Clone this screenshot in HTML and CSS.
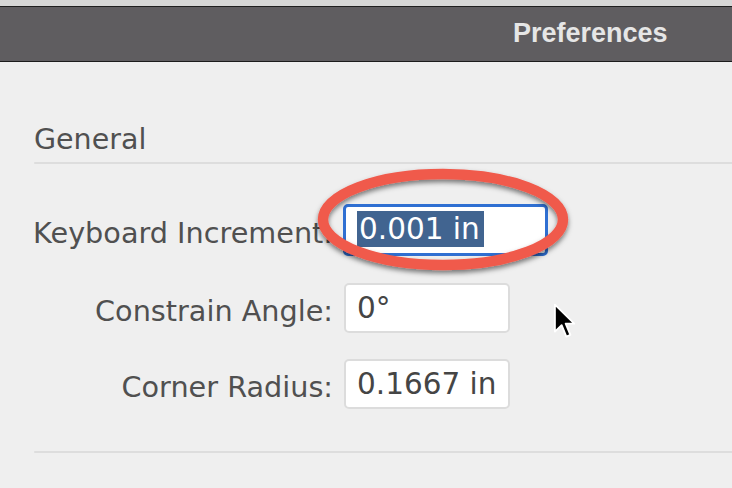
FILE: index.html
```html
<!DOCTYPE html>
<html>
<head>
<meta charset="utf-8">
<link rel="stylesheet" href="styles.css">
</head>
<body>
<div class="topstrip"></div>
<header class="titlebar"><span class="title">Preferences</span></header>
<main class="content">
  <h2 class="section">General</h2>
  <div class="rule"></div>
  <div class="form">
    <label class="label">Keyboard Increment:</label>
    <div class="field focused"><span class="sel">0.001 in</span></div>
    <label class="label">Constrain Angle:</label>
    <div class="field">0°</div>
    <label class="label">Corner Radius:</label>
    <div class="field">0.1667 in</div>
  </div>
  <div class="rule bottom"></div>
</main>
<svg class="annot" width="732" height="488" viewBox="0 0 732 488">
  <defs>
    <filter id="sh" x="-20%" y="-30%" width="140%" height="160%">
      <feDropShadow dx="0" dy="3" stdDeviation="2.5" flood-color="#000" flood-opacity="0.5"/>
    </filter>
  </defs>
  <ellipse cx="443" cy="219.5" rx="120" ry="45.5" fill="none" stroke="#f05a4c" stroke-width="10.5" filter="url(#sh)"/>
</svg>
<svg class="cursor" width="24" height="37" viewBox="0 0 14 22">
  <path d="M1 1 L1 17 L5 13.2 L7.8 20 L10.2 19 L7.4 12.3 L12.5 12.3 Z" fill="#000" stroke="#fff" stroke-width="1.1" stroke-linejoin="round"/>
</svg>
</body>
</html>
```
FILE: styles.css
```css
html, body {
  margin: 0;
  padding: 0;
}
body {
  width: 732px;
  height: 488px;
  overflow: hidden;
  background: #efefef;
  font-family: "DejaVu Sans", "Verdana", sans-serif;
  position: relative;
}
.topstrip {
  height: 6px;
  background: #d6d6d6;
  border-bottom: 1px solid #1e1e1e;
}
.titlebar {
  height: 55px;
  background: #5f5d60;
  border-bottom: 1px solid #1c1c1c;
  display: flex;
  align-items: center;
  padding-left: 513px;
  box-sizing: border-box;
}
.title {
  font-family: "Liberation Sans", Arial, sans-serif;
  font-weight: bold;
  font-size: 27px;
  color: #e6e6e6;
  line-height: 1;
  margin-top: -1px;
}
.content {
  padding-left: 34px;
}
.section {
  margin: 61px 0 0 0;
  font-weight: normal;
  font-size: 28.5px;
  line-height: 34px;
  color: #505050;
}
.rule {
  height: 2px;
  background: #dddddd;
  margin-top: 5px;
  border-radius: 1px 0 0 1px;
}
.rule.bottom {
  margin-top: 42px;
}
.form {
  margin-top: 40px;
  display: grid;
  grid-template-columns: 299px auto;
  column-gap: 11px;
  row-gap: 26.5px;
  align-items: center;
  justify-items: start;
}
.label {
  justify-self: end;
  font-size: 28.7px;
  line-height: 34px;
  color: #505050;
  padding-top: 6px;
  white-space: nowrap;
}
.field {
  width: 166px;
  height: 50px;
  box-sizing: border-box;
  background: #ffffff;
  border: 2px solid #dcdcdc;
  border-radius: 5px;
  font-size: 29.5px;
  line-height: 46px;
  color: #454545;
  padding-left: 11px;
  white-space: nowrap;
}
.field.focused {
  width: 205px;
  height: 52px;
  margin-left: -1px;
  border: 3px solid #2f6fd2;
  border-radius: 5px;
  padding: 4px 0 0 11px;
  line-height: 36px;
}
.sel {
  display: inline-block;
  background: #416490;
  color: #ffffff;
  padding: 0 4px 0 2px;
  line-height: 36px;
  height: 36px;
}
.annot {
  position: absolute;
  left: 0;
  top: 0;
  pointer-events: none;
}
.cursor {
  position: absolute;
  left: 553px;
  top: 303px;
}
```
